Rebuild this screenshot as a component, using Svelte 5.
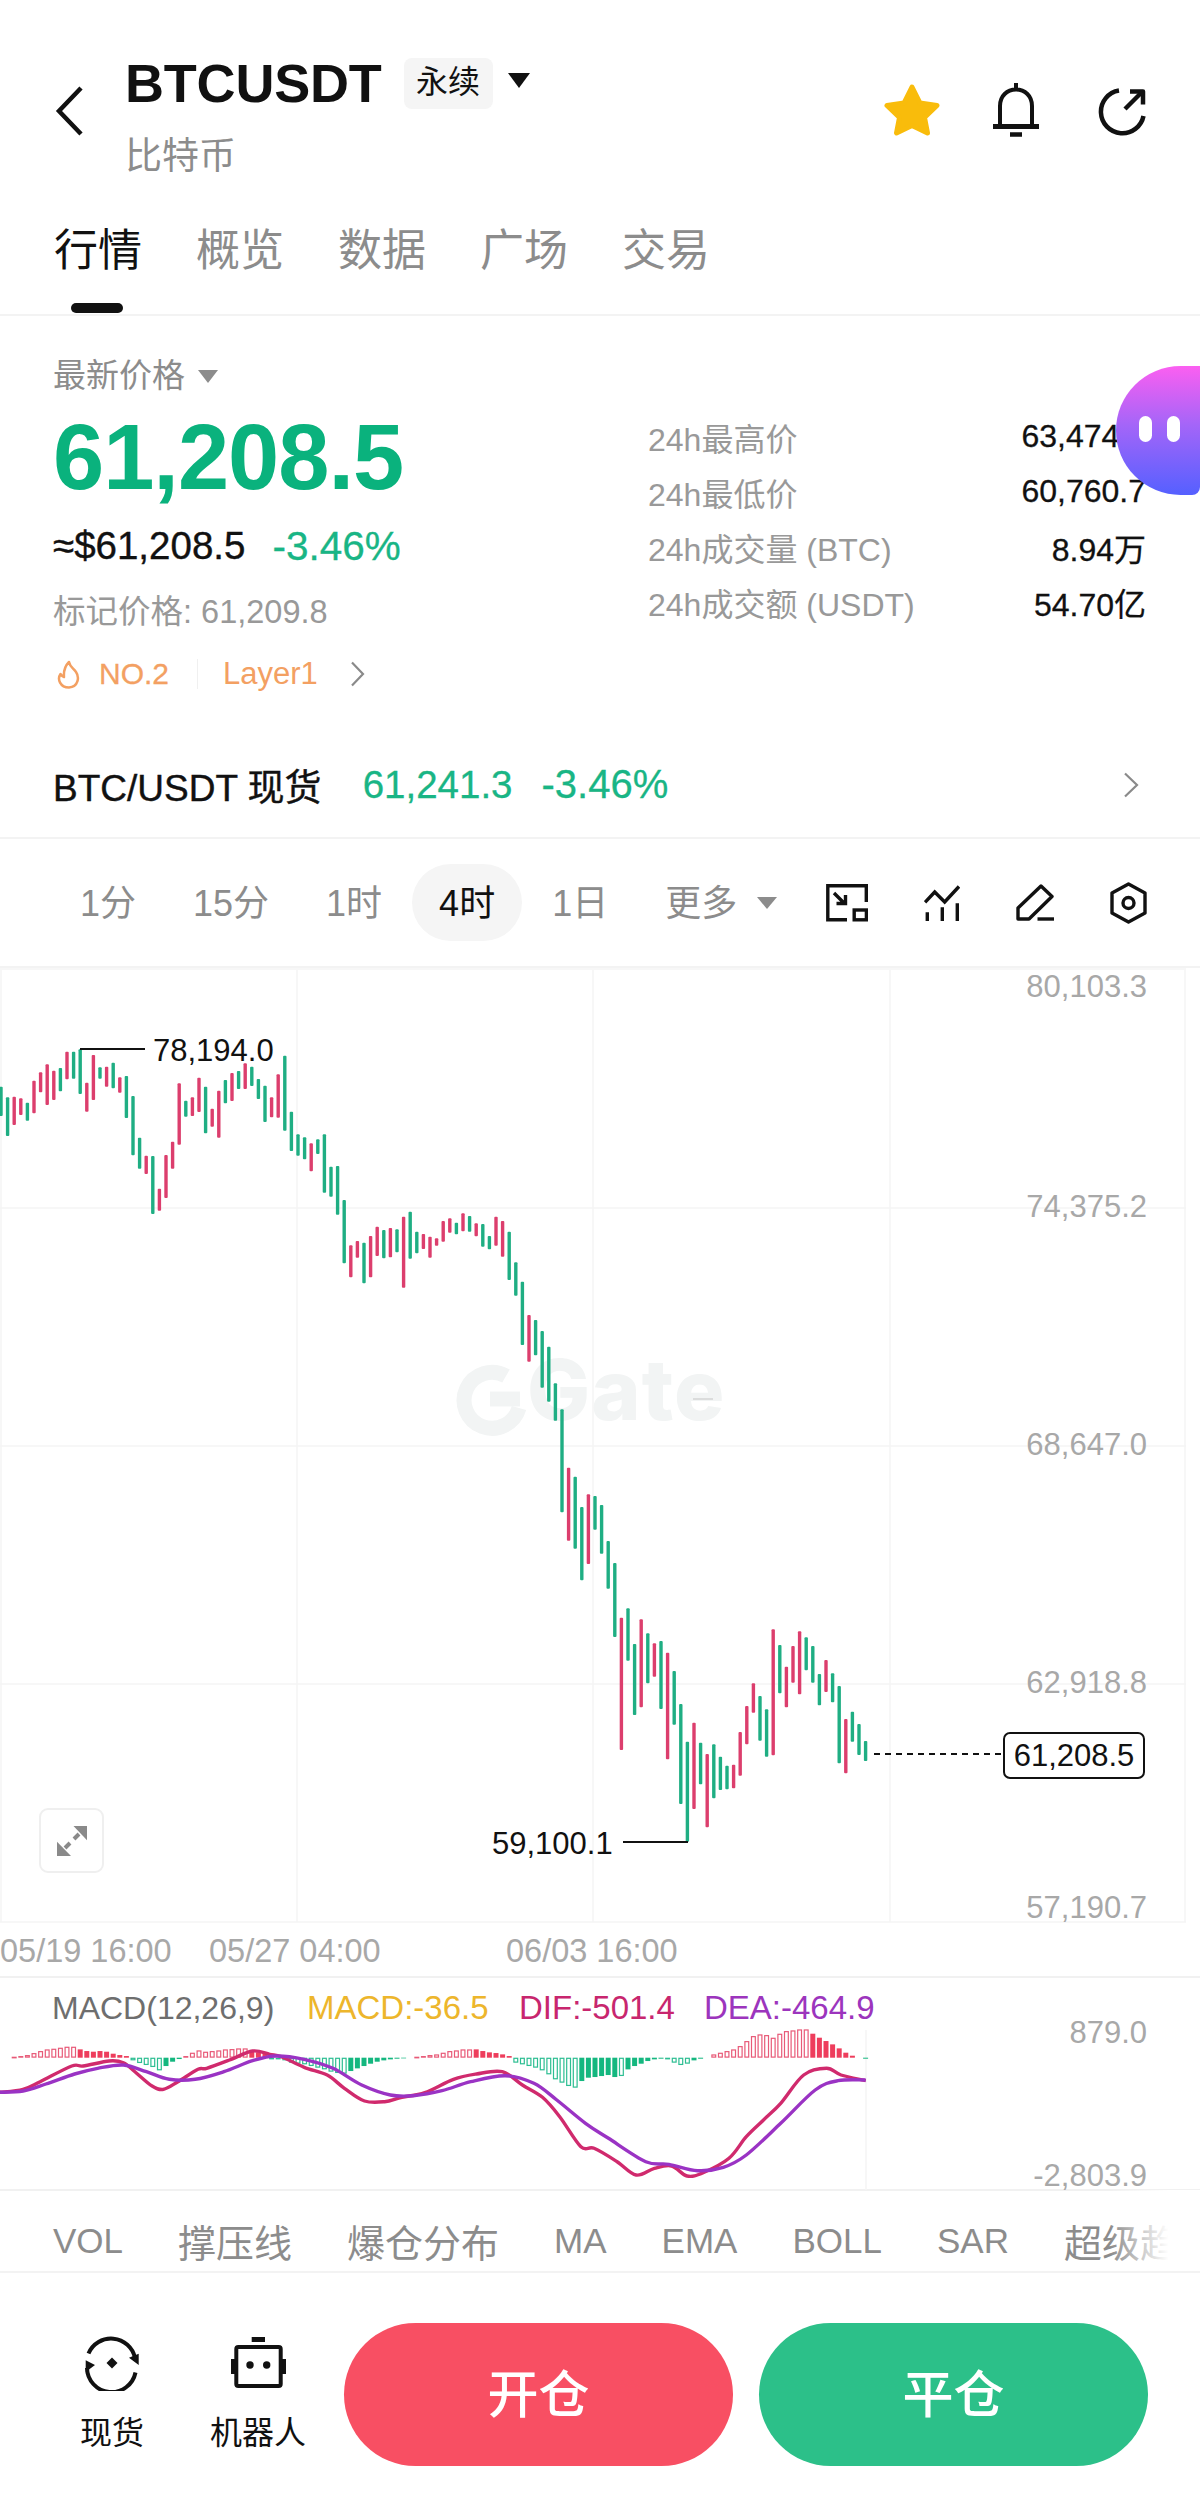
<script>
  const parse = (s, y0) =>
    s.trim().split(/\s+/).map((t) => {
      const [a, b] = t.slice(1).split(',').map(Number);
      return { up: t[0] === 'r', top: y0 + a / 3, bottom: y0 + b / 3 };
    });

  const series = [
    ...parse(`g140,228 g172,288 r170,255 r175,225 g188,242 r122,220 r97,157 r73,195 r92,180 g84,154 r35,118 g35,116 g28,162 r128,215 r45,180 g82,116 r80,140 g68,145 r112,158 g108,234 g168,346 g293,386 r347,402 g348,522 r446,512 r345,474 r305,386 r130,314 g182,230 r172,228 r113,216 g140,280 r206,260 r152,293 g120,190 r99,183 g93,147 r70,147 g80,138 g117,177 g137,246 r172,232 r103,233 g47,272`, 1040),
    ...parse(`g455,573 g523,587 g532,598 r550,634 g538,582 g523,698 g620,710 g618,764 g720,910 r856,952 r843,893 g848,970 r828,952 r800,888 g810,895 r804,892 g808,877 r770,983 g755,896 g815,880 r822,867 r830,893 r835,857 r783,845 r775,818 g788,823 r760,814 g768,815 r790,829 g792,860 g828,868 r770,857 r783,890 g815,960 g907,1007`, 960),
    ...parse(`g-55,135 r45,185 g60,166 g93,263 g140,305 g250,362 g328,637 r503,722 g530,746 g621,841 r583,792 g588,689 g615,761 g723,866 g789,1011`, 1300),
    ...parse(`r53,450 g25,182 g132,345 r58,322 g100,250 r130,230 g123,327 r158,478 g213,374 g312,612 g425,725 r368,627 g428,553 r462,682 g433,595 g470,570 g497,568 r494,565 r396,527 r318,433 r250,338 g288,422 g328,470 r88,466 g135,280 r200,322 r138,248 r94,283 g112,211 g138,248 g222,316 r180,276 g220,307 g258,490 r357,520 g335,425 g372,465 g423,483`, 1600)
  ];
  const candles = series.map((c, i) => ({ ...c, x: 1 + 6.6 * i }));

  const priceScale = [
    { y: 997, t: '80,103.3' },
    { y: 1217, t: '74,375.2' },
    { y: 1455, t: '68,647.0' },
    { y: 1693, t: '62,918.8' },
    { y: 1918, t: '57,190.7' }
  ];
  const gridY = [1208, 1446, 1684, 1922];
  const gridX = [1, 297, 593, 890, 1185];

  // negative = hollow bar
  const hist = [
    { i: 2, up: true, h: [-3, -5, -8, -14, -20, -25, -27, -30, -33, -33, 25, 20, 18, 20, 18, 12, 8, 5] },
    { i: 20, up: false, h: [-8, -16, -22, -28, -38, 25, 12, 4] },
    { i: 28, up: true, h: [-5, -15, -22, -18, -20, -22, -25, -26, -28, -28, 20, 16, 12] },
    { i: 41, up: false, h: [-3, -5, -8, -15, -18, -20, -25, -30, -35, -42, -46, -48, 40, 32, 25, 18, 12, 8, 5, 3, 2] },
    { i: 63, up: true, h: [-3, -5, -8, -10, -15, -20, -22, -25, -25, 25, 20, 16, 14, 10, 5] },
    { i: 78, up: false, h: [-15, -20, -25, -30, -38, -50, -65, -75, -85, -90, 70, 60, 58, 55, 52, 58, -55, 35, 25, 18, 10, 5, 3, -5, -15, -22, -18, 8, 3] },
    { i: 108, up: true, h: [-10, -15, -20, -25, -35, -50, -65, -70, -68, -60, -72, -80, -82, -85, -85, 72, 60, 50, 40, 28, 15, 6] },
    { i: 131, up: false, h: [3] }
  ];
  const zero = 2057.7;
  const bars = hist.flatMap((seg) =>
    seg.h.map((v, k) => {
      const h = Math.abs(v) / 3;
      return {
        x: 1 + 6.6 * (seg.i + k) - 2.5,
        y: seg.up ? zero - h : zero,
        h,
        up: seg.up,
        hollow: v < 0
      };
    })
  );

  // Catmull-Rom smoothing through the sampled points
  const toPath = (arr) => {
    const p = arr.map(([x, y]) => [x / 1.742, 1960 + y / 3]);
    let d = `M${p[0][0].toFixed(1)} ${p[0][1].toFixed(1)}`;
    for (let i = 0; i < p.length - 1; i++) {
      const a = p[i - 1] || p[i];
      const b = p[i];
      const c = p[i + 1];
      const e = p[i + 2] || c;
      const c1 = [b[0] + (c[0] - a[0]) / 6, b[1] + (c[1] - a[1]) / 6];
      const c2 = [c[0] - (e[0] - b[0]) / 6, c[1] - (e[1] - b[1]) / 6];
      d += `C${c1[0].toFixed(1)} ${c1[1].toFixed(1)} ${c2[0].toFixed(1)} ${c2[1].toFixed(1)} ${c[0].toFixed(1)} ${c[1].toFixed(1)}`;
    }
    return d;
  };
  const dif = toPath([[0,397],[40,388],[70,365],[125,318],[145,318],[190,303],[215,308],[235,335],[265,378],[285,388],[310,365],[345,328],[360,325],[400,300],[440,273],[470,283],[490,290],[530,322],[570,345],[600,385],[635,423],[670,425],[700,412],[740,398],[790,358],[830,342],[875,335],[910,375],[945,412],[975,470],[1012,560],[1035,565],[1075,605],[1108,645],[1140,625],[1170,618],[1197,648],[1225,638],[1270,595],[1300,530],[1330,480],[1360,430],[1400,345],[1440,325],[1465,345],[1508,362]]);
  const dea = toPath([[0,397],[40,393],[80,372],[130,342],[170,325],[215,315],[255,335],[295,358],[340,358],[390,335],[440,302],[480,288],[530,298],[580,325],[630,375],[680,405],[720,407],[770,392],[820,365],[880,347],[930,370],[970,420],[1020,490],[1060,535],[1125,605],[1165,613],[1215,632],[1260,622],[1300,585],[1360,490],[1420,390],[1460,362],[1508,360]]);

  const tabs = ['行情', '概览', '数据', '广场', '交易'];
  const frames = ['1分', '15分', '1时', '4时', '1日'];
  const stats = [
    ['24h最高价', '63,474.0'],
    ['24h最低价', '60,760.7'],
    ['24h成交量 (BTC)', '8.94万'],
    ['24h成交额 (USDT)', '54.70亿']
  ];
  const indicators = [
    ['VOL', false], ['撑压线', true], ['爆仓分布', true], ['MA', false],
    ['EMA', false], ['BOLL', false], ['SAR', false], ['超级趋势', true]
  ];
</script>

<div class="page">
  <header class="head">
    <svg class="back" width="30" height="52" viewBox="0 0 30 52" fill="none" stroke="#111" stroke-width="4.5">
      <path d="M26 3 4 26l22 23" />
    </svg>
    <div class="titles">
      <div class="title-row">
        <span class="symbol">BTCUSDT</span>
        <span class="badge">永续</span>
        <span class="tri-black"></span>
      </div>
      <div class="sub">比特币</div>
    </div>
    <div class="acts">
      <svg width="56" height="52" viewBox="0 0 56 52">
        <path fill="#F9BC0B" stroke="#F9BC0B" stroke-width="5" stroke-linejoin="round" d="M28 3l8 16 17 2.500-12.500 12 3 15.500L28 41.500 12.500 49l3-15.500L3 21.500 20 19z" />
      </svg>
      <svg class="bell" width="46" height="54" viewBox="0 0 46 54" fill="none" stroke="#111" stroke-width="4">
        <path d="M23 0v6M7 43V23C7 13 14 6.500 23 6.500S39 13 39 23v20" />
        <path stroke-width="5" d="M0 43.500h46" />
        <path stroke-width="4.500" d="M17 51.500h12" />
      </svg>
      <svg class="share" width="48" height="48" viewBox="0 0 48 48" fill="none" stroke="#111" stroke-width="4.500">
        <path d="M21 2.500A21.500 21.500 0 1 0 45.500 28" />
        <path d="M27 21 44 4" />
        <path stroke-linejoin="round" d="M32 3.500h13v13" />
      </svg>
    </div>
  </header>

  <nav class="tabs">
    {#each tabs as t, i}
      <span class="tab" class:active={i === 0}>{t}</span>
    {/each}
  </nav>

  <section class="info">
    <div class="info-left">
      <div class="latest">最新价格<span class="tri-grey"></span></div>
      <div class="price">61,208.5</div>
      <div class="approx"><span class="usd">≈$61,208.5</span><span class="chg">-3.46%</span></div>
      <div class="mark">标记价格: 61,209.8</div>
      <div class="tags">
        <svg width="24" height="29" viewBox="0 0 24 29" fill="none" stroke="#F3A062" stroke-width="2.500">
          <path stroke-linejoin="round" d="M12 2c1 5 4 6 7 10 3.500 5 2.500 15-7 15.500C3 27.500 0 19 3.500 14c1 1.500 2 2.500 3.500 3C6.500 11 8 6 12 2z" />
        </svg>
        <span class="no">NO.2</span>
        <span class="sep"></span>
        <span class="layer">Layer1</span>
        <svg class="tag-chev" width="15" height="26" viewBox="0 0 15 26" fill="none" stroke="#8a8a8a" stroke-width="2.200">
          <path d="M2 1.500 13 13 2 24.500" />
        </svg>
      </div>
    </div>
    <dl class="stats">
      {#each stats as [k, v]}
        <div class="stat"><dt>{k}</dt><dd>{v}</dd></div>
      {/each}
    </dl>
    <div class="blob"><i></i><i></i></div>
  </section>

  <div class="spot">
    <span class="pair">BTC/USDT 现货</span>
    <span class="spot-price">61,241.3</span>
    <span class="spot-chg">-3.46%</span>
    <svg class="spot-chev" width="16" height="26" viewBox="0 0 16 26" fill="none" stroke="#8a8a8a" stroke-width="2.200">
      <path d="M2 1.500 14 13 2 24.500" />
    </svg>
  </div>

  <div class="frames">
    {#each frames as f, i}
      <span class="frame" class:on={i === 3}>{f}</span>
    {/each}
    <span class="frame more">更多</span>
    <span class="tri-more"></span>
    <div class="tools">
      <svg width="42" height="38" viewBox="0 0 42 38" fill="none" stroke="#111" stroke-width="3.400">
        <path d="M21 35.800H1.800V1.800h38.500V18" />
        <rect x="28.200" y="26" width="12.200" height="9.800" />
        <path d="M8 9l10 10M19.500 11v8.500H10.500" />
      </svg>
      <svg width="36" height="36" viewBox="0 0 36 36" fill="none" stroke="#111" stroke-width="3.400">
        <path d="M1 17.300 10.700 7l10 10L35 1.500" />
        <path d="M3.300 27.300V36M18.300 22.300V36M33.300 18.300V36" />
      </svg>
      <svg width="38" height="37" viewBox="0 0 38 37" fill="none" stroke="#111" stroke-width="3.400">
        <path stroke-linejoin="round" d="M25 2 36 12.500 13 35H2V24z" />
        <path d="M21.500 35H38" />
      </svg>
      <svg width="37" height="42" viewBox="0 0 37 42" fill="none" stroke="#111" stroke-width="3.400">
        <path stroke-linejoin="round" d="M18.500 2 35 11v20l-16.500 9L2 31V11z" />
        <circle cx="18.500" cy="21" r="5.500" />
      </svg>
    </div>
  </div>

  <div class="chart">
    <svg width="1200" height="1008" viewBox="0 968 1200 1008">
      {#each gridY as y}<line x1="0" x2="1186" y1={y} y2={y} class="grid" />{/each}
      <line x1="0" x2="1186" y1="969" y2="969" class="grid" />
      {#each gridX as x}<line x1={x} x2={x} y1="970" y2="1922" class="grid" />{/each}

      <g fill="none" stroke="#f2f4f4" stroke-width="15">
        <path d="M506 1376a28 28 0 1 0 13 32" />
        <path d="M490 1399h30" />
      </g>
      <text class="wm" x="527" y="1420">Gate</text>
      <line x1="693" x2="713" y1="1399" y2="1399" stroke="#c4c4c4" stroke-width="1" />

      {#each candles as c}
        <rect x={c.x - 1.7} y={c.top} width="3.400" height={c.bottom - c.top} rx="1" class={c.up ? 'red' : 'green'} />
      {/each}

      <line x1="80" x2="145" y1="1049" y2="1049" class="lead" />
      <text class="t dark" x="153" y="1061">78,194.0</text>
      <line x1="623" x2="688" y1="1842" y2="1842" class="lead" />
      <text class="t dark" x="492" y="1854">59,100.1</text>

      {#each priceScale as p}
        <text class="t axis" x="1147" y={p.y} text-anchor="end">{p.t}</text>
      {/each}

      <line x1="874" x2="1003" y1="1754" y2="1754" class="dash" />
      <rect x="1004" y="1733" width="140" height="45" rx="6" class="tag" />
      <text class="t dark" x="1074" y="1766" text-anchor="middle">61,208.5</text>

      <text class="t axis wide" x="0" y="1962">05/19 16:00</text>
      <text class="t axis wide" x="209" y="1962">05/27 04:00</text>
      <text class="t axis wide" x="506" y="1962">06/03 16:00</text>
    </svg>
    <div class="expand">
      <svg width="30" height="30" viewBox="0 0 30 30" fill="#8a8a8a" stroke="#8a8a8a">
        <path stroke="none" d="M16.500 0H30v14.300z" />
        <path stroke="none" d="M0 15.700V30h14z" />
        <path fill="none" stroke-width="4" d="M22 8l-5 5M8 22l5-5" />
      </svg>
    </div>
  </div>

  <svg class="macd" width="1200" height="214" viewBox="0 1976 1200 214">
    <line x1="0" x2="1200" y1="1977" y2="1977" class="grid2" />
    <line x1="0" x2="1200" y1="2190" y2="2190" class="grid2" />
    <line x1="866" x2="866" y1="2030" y2="2190" class="grid" />
    <text class="m gray" x="52" y="2019">MACD(12,26,9)</text>
    <text class="m yellow" x="307" y="2019">MACD:-36.5</text>
    <text class="m crimson" x="519" y="2019">DIF:-501.4</text>
    <text class="m violet" x="704" y="2019">DEA:-464.9</text>
    <text class="t axis" x="1147" y="2043" text-anchor="end">879.0</text>
    <text class="t axis" x="1147" y="2186" text-anchor="end">-2,803.9</text>
    {#each bars as b}
      {#if b.hollow}
        <rect x={b.x + 0.6} y={b.y + 0.6} width="3.800" height={Math.max(b.h - 1.2, 0.5)} fill="#fff" stroke={b.up ? '#E85A78' : '#2DBE92'} stroke-width="1.200" />
      {:else}
        <rect x={b.x} y={b.y} width="5" height={b.h} fill={b.up ? '#EE3D5C' : '#14B77F'} />
      {/if}
    {/each}
    <path d={dif} fill="none" stroke="#D02A6D" stroke-width="3.400" stroke-linejoin="round" />
    <path d={dea} fill="none" stroke="#9A33C4" stroke-width="3.400" stroke-linejoin="round" />
  </svg>

  <div class="inds">
    {#each indicators as [t, cjk]}
      <span class:cjk>{t}</span>
    {/each}
  </div>

  <footer class="foot">
    <div class="tool spot-tool">
      <svg width="55" height="55" viewBox="0 0 55 55" fill="none" stroke="#111" stroke-width="4">
        <path d="M3.500 17.500A24.500 24.500 0 0 1 50 22" />
        <path d="M50.500 36.500A24.500 24.500 0 0 1 2 32" />
        <path fill="#111" stroke="none" d="M44 21.700 53.700 17.700V29zM.7 24.300 10 29 .7 36z" />
        <path fill="#111" stroke="none" d="M27 21.500 32.500 27 27 32.500 21.500 27z" />
      </svg>
      <span>现货</span>
    </div>
    <div class="tool bot-tool">
      <svg width="55" height="55" viewBox="0 0 55 55" fill="none" stroke="#111" stroke-width="4">
        <path fill="#111" stroke="none" d="M20.700 1H34v5H20.700zM0 23h4v15H0zM51 23h4v15h-4z" />
        <rect x="5.300" y="11" width="44.400" height="39" rx="2" />
        <circle cx="19" cy="29" r="3.700" fill="#111" stroke="none" />
        <circle cx="35.700" cy="29" r="3.700" fill="#111" stroke="none" />
      </svg>
      <span>机器人</span>
    </div>
    <div class="btn open">开仓</div>
    <div class="btn close">平仓</div>
  </footer>
</div>

<style>
  :global(body) {
    margin: 0;
    background: #fff;
  }
  .page {
    position: relative;
    width: 1200px;
    height: 2504px;
    overflow: hidden;
    background: #fff;
    color: #111;
    font-family: 'Liberation Sans', 'Noto Sans CJK SC', sans-serif;
  }
  svg {
    display: block;
  }
  .head {
    display: flex;
    align-items: flex-start;
    height: 190px;
    padding: 0 54px 0 55px;
    box-sizing: border-box;
  }
  .back {
    margin-top: 85px;
    flex: none;
  }
  .titles {
    margin-left: 40px;
    padding-top: 56px;
  }
  .title-row {
    display: flex;
    align-items: center;
    height: 54px;
  }
  .symbol {
    font-size: 54px;
    font-weight: 700;
    line-height: 54px;
    letter-spacing: -0.2px;
  }
  .badge {
    margin-left: 22px;
    width: 89px;
    height: 51px;
    line-height: 49px;
    text-align: center;
    background: #f5f5f5;
    border-radius: 8px;
    font-size: 32px;
  }
  .tri-black {
    margin-left: 15px;
    margin-top: -6px;
    border-left: 11.500px solid transparent;
    border-right: 11.500px solid transparent;
    border-top: 15px solid #111;
  }
  .sub {
    margin-top: 28px;
    font-size: 37px;
    line-height: 37px;
    color: #8c8c8c;
  }
  .acts {
    display: flex;
    align-items: center;
    margin: 83px 0 0 auto;
  }
  .bell {
    margin-left: 53px;
  }
  .share {
    margin-left: 59px;
    margin-top: 3px;
  }
  .tabs {
    display: flex;
    gap: 54px;
    margin-top: 29px;
    padding-left: 54px;
    height: 95px;
    border-bottom: 2px solid #f3f3f3;
  }
  .tab {
    position: relative;
    font-size: 44px;
    line-height: 64px;
    color: #8c8c8c;
  }
  .tab.active {
    color: #111;
  }
  .tab.active::after {
    content: '';
    position: absolute;
    left: 17px;
    width: 52px;
    height: 10px;
    top: 84px;
    border-radius: 5px;
    background: #111;
  }
  .info {
    position: relative;
    display: flex;
    justify-content: space-between;
    height: 416px;
  }
  .info-left {
    padding: 40px 0 0 53px;
  }
  .latest {
    display: flex;
    align-items: center;
    font-size: 33px;
    line-height: 40px;
    color: #8c8c8c;
  }
  .tri-grey {
    margin-left: 13px;
    border-left: 10px solid transparent;
    border-right: 10px solid transparent;
    border-top: 13px solid #8c8c8c;
  }
  .price {
    margin-top: 15px;
    font-size: 92px;
    line-height: 92px;
    font-weight: 700;
    letter-spacing: -1px;
    color: #0ab27d;
  }
  .approx {
    display: flex;
    align-items: center;
    gap: 27px;
    margin-top: 21px;
    font-size: 38.500px;
    line-height: 44px;
  }
  .usd {
    -webkit-text-stroke: 0.4px #111;
  }
  .chg {
    font-size: 40.500px;
    color: #19b585;
    -webkit-text-stroke: 0.3px #19b585;
  }
  .mark {
    margin-top: 24px;
    font-size: 32.500px;
    line-height: 40px;
    color: #999;
  }
  .tags {
    display: flex;
    align-items: center;
    margin-top: 22px;
    height: 40px;
    font-size: 31px;
    color: #f3a062;
    margin-left: 4px;
  }
  .no {
    margin-left: 18px;
    font-size: 30px;
    -webkit-text-stroke: 0.3px #f3a062;
  }
  .sep {
    width: 1px;
    height: 30px;
    margin: 0 25px 0 28px;
    background: #f0f0f0;
  }
  .tag-chev {
    margin-left: 32px;
  }
  .stats {
    width: 498px;
    margin: 0 54px 0 0;
    padding-top: 93px;
    font-size: 32px;
  }
  .stat {
    display: flex;
    justify-content: space-between;
    align-items: center;
    height: 55px;
  }
  dt {
    color: #999;
  }
  dd {
    margin: 0;
    color: #111;
    -webkit-text-stroke: 0.3px #111;
  }
  .blob {
    position: absolute;
    left: 1116px;
    top: 50px;
    width: 84px;
    height: 129px;
    border-radius: 65px 0 8px 65px;
    background: linear-gradient(180deg, #fb5ff1 0%, #a565f8 45%, #5560ff 100%);
  }
  .blob i {
    position: absolute;
    top: 50px;
    width: 13px;
    height: 26px;
    border-radius: 7px;
    background: #fff;
  }
  .blob i:first-child {
    left: 23px;
  }
  .blob i:last-child {
    left: 51px;
  }
  .spot {
    display: flex;
    align-items: center;
    height: 105px;
    padding: 0 61px 0 53px;
    border-bottom: 2px solid #f3f3f3;
  }
  .pair {
    font-size: 37px;
    -webkit-text-stroke: 0.4px #111;
  }
  .spot-price {
    margin-left: 41px;
    font-size: 38.500px;
    color: #19b585;
    -webkit-text-stroke: 0.3px #19b585;
  }
  .spot-chg {
    margin-left: 29px;
    font-size: 40px;
    color: #19b585;
    -webkit-text-stroke: 0.3px #19b585;
  }
  .spot-chev {
    margin-left: auto;
  }
  .frames {
    display: flex;
    align-items: center;
    gap: 3px;
    height: 127px;
    padding: 0 53px;
    border-bottom: 2px solid #f3f3f3;
  }
  .frame {
    height: 77px;
    line-height: 79px;
    padding: 0 27px;
    border-radius: 38.500px;
    font-size: 36px;
    color: #8c8c8c;
  }
  .frame.on {
    background: #f5f5f5;
    color: #111;
  }
  .frame.more {
    padding-right: 0;
  }
  .tri-more {
    margin-left: 17px;
    border-left: 10.500px solid transparent;
    border-right: 10.500px solid transparent;
    border-top: 12px solid #8c8c8c;
  }
  .tools {
    display: flex;
    align-items: center;
    gap: 56px;
    margin-left: auto;
  }
  .chart {
    position: relative;
    height: 1008px;
  }
  .grid {
    stroke: #f4f4f4;
    stroke-width: 1.500;
  }
  .grid2 {
    stroke: #f1f1f1;
    stroke-width: 2;
  }
  .green {
    fill: #1fae83;
  }
  .red {
    fill: #dc3e6d;
  }
  .lead {
    stroke: #111;
    stroke-width: 1.800;
  }
  .dash {
    stroke: #111;
    stroke-width: 1.800;
    stroke-dasharray: 6 5;
  }
  .tag {
    fill: #fff;
    stroke: #111;
    stroke-width: 2;
  }
  .t {
    font-size: 31px;
  }
  .t.wide {
    font-size: 32.500px;
  }
  .dark {
    fill: #111;
  }
  .axis {
    fill: #a8a8a8;
  }
  .wm {
    font-family: Inter, sans-serif;
    font-weight: 800;
    font-size: 84px;
    letter-spacing: 1px;
    fill: #f2f4f4;
  }
  .expand {
    position: absolute;
    left: 39px;
    top: 840px;
    width: 65px;
    height: 65px;
    box-sizing: border-box;
    display: flex;
    align-items: center;
    justify-content: center;
    border: 2px solid #efefef;
    border-radius: 9px;
    background: #fff;
  }
  .macd {
    overflow: visible;
  }
  .m {
    font-size: 33px;
  }
  .gray {
    font-size: 32px;
    fill: #6e6e6e;
  }
  .yellow {
    fill: #edb62c;
  }
  .crimson {
    fill: #c8266e;
  }
  .violet {
    fill: #9c35bd;
  }
  .inds {
    position: relative;
    display: flex;
    align-items: center;
    gap: 55px;
    height: 59px;
    padding: 21px 0 1px 53px;
    border-bottom: 2px solid #f3f3f3;
    font-size: 35px;
    color: #8c8c8c;
    white-space: nowrap;
    overflow: hidden;
  }
  .inds .cjk {
    font-size: 38px;
  }
  .inds::after {
    content: '';
    position: absolute;
    right: 0;
    top: 0;
    bottom: 0;
    width: 90px;
    background: linear-gradient(90deg, rgba(255, 255, 255, 0) 0, #fff 65%);
  }
  .foot {
    display: flex;
    align-items: flex-start;
    padding: 50px 52px 0 0;
  }
  .tool {
    display: flex;
    flex-direction: column;
    align-items: center;
    padding-top: 13px;
    font-size: 32px;
  }
  .tool span {
    margin-top: 22px;
    line-height: 40px;
  }
  .spot-tool {
    margin-left: 80px;
  }
  .bot-tool {
    margin-left: 66px;
  }
  .btn {
    width: 389px;
    height: 143px;
    line-height: 146px;
    text-align: center;
    border-radius: 72px;
    color: #fff;
    font-size: 51px;
    font-weight: 500;
  }
  .open {
    margin-left: 38px;
    background: #f84f63;
  }
  .close {
    margin-left: 26px;
    background: #2cc089;
  }
</style>
